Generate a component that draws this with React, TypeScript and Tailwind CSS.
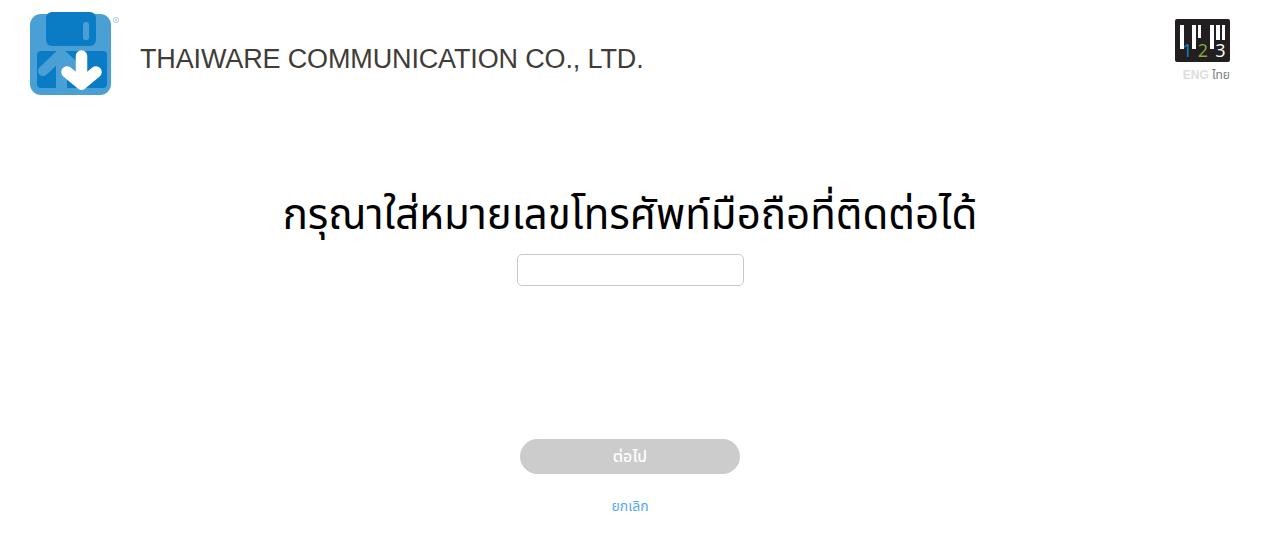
const THAI = "font-['Noto_Sans_Thai','Noto_Sans','Liberation_Sans',sans-serif]"

function Logo() {
  return (
    <svg width="90" height="84" viewBox="0 0 90 84" className="block">
      <rect x="0" y="2" width="81" height="81" rx="11" fill="#4a9fd5" />
      <rect x="16" y="0" width="50" height="34" rx="6" fill="#0a7cc6" />
      <rect x="53" y="10" width="6" height="18" rx="2.5" fill="#4a9fd5" />
      <rect x="7" y="39" width="70" height="37" rx="4" fill="#0a7cc6" />
      {/* light up arrow behind */}
      <path d="M13 59 L31 42 L50 59" fill="none" stroke="#4a9fd5" strokeWidth="10" strokeLinecap="round" strokeLinejoin="round" />
      <rect x="26" y="40" width="11" height="37" fill="#4a9fd5" />
      {/* white down arrow */}
      <path
        d="M51.500 44 V70 M37 60 L51.500 72 L66 60"
        fill="none"
        stroke="#fff"
        strokeWidth="11.500"
        strokeLinecap="round"
        strokeLinejoin="round"
      />
      <circle cx="86" cy="8" r="2.600" fill="none" stroke="#8fc3e4" strokeWidth="0.800" />
      <circle cx="86" cy="8" r="0.900" fill="#8fc3e4" />
    </svg>
  )
}

function Barcode() {
  return (
    <svg width="55" height="43" viewBox="0 0 55 43" className="block">
      <rect width="55" height="43" rx="2" fill="#231f20" />
      <rect x="5" y="6" width="4" height="24" fill="#fff" />
      <rect x="17" y="6" width="4" height="24" fill="#fff" />
      <rect x="23" y="6" width="3" height="13" fill="#fff" />
      <rect x="35" y="6" width="4" height="24" fill="#fff" />
      <rect x="41" y="6" width="4" height="15" fill="#fff" />
      <rect x="47" y="6" width="3" height="15" fill="#fff" />
      <text x="12.500" y="38" fontSize="18" fontFamily="Open Sans" textAnchor="middle" fill="#0a85c4">1</text>
      <text x="28" y="38" fontSize="18" fontFamily="Open Sans" textAnchor="middle" fill="#7fb13c">2</text>
      <text x="45.500" y="38" fontSize="18" fontFamily="Open Sans" textAnchor="middle" fill="#fff">3</text>
    </svg>
  )
}

export default function App() {
  return (
    <div className={`h-[558px] w-full bg-white ${THAI}`}>
      <header className="flex items-start justify-between pl-[30px] pr-[43px] pt-3">
        <div className="flex items-start">
          <Logo />
          <h1 className="ml-5 mt-[29px] font-['Liberation_Sans',sans-serif] text-[27px] leading-[36px] tracking-[-0.14px] text-[#403c38]">
            THAIWARE COMMUNICATION CO., LTD.
          </h1>
        </div>
        <div className="flex flex-col items-end pt-[7px]">
          <Barcode />
          <div className="mt-[5px] text-[12px] leading-[16px]">
            <span className="font-['Liberation_Sans',sans-serif] font-bold text-[#dddddd]">ENG</span>{" "}
            <span className="text-[#7d7d7d]">ไทย</span>
          </div>
        </div>
      </header>

      <main className="flex flex-col items-center pr-[13px]">
        <h2 className="mt-[92px] text-[42px] leading-[56px] text-black">
          กรุณาใส่หมายเลขโทรศัพท์มือถือที่ติดต่อได้
        </h2>
        <input
          type="text"
          className="mt-[10px] h-8 w-[227px] rounded-[5px] border border-[#c9c9c9] bg-white outline-none"
        />
        <button className="mt-[153px] h-[35px] w-[220px] rounded-full bg-[#cccccc] text-[16px] font-medium text-white">
          ต่อไป
        </button>
        <a className="mt-[23px] text-[14px] leading-[20px] text-[#55a9f2]">ยกเลิก</a>
      </main>
    </div>
  )
}
